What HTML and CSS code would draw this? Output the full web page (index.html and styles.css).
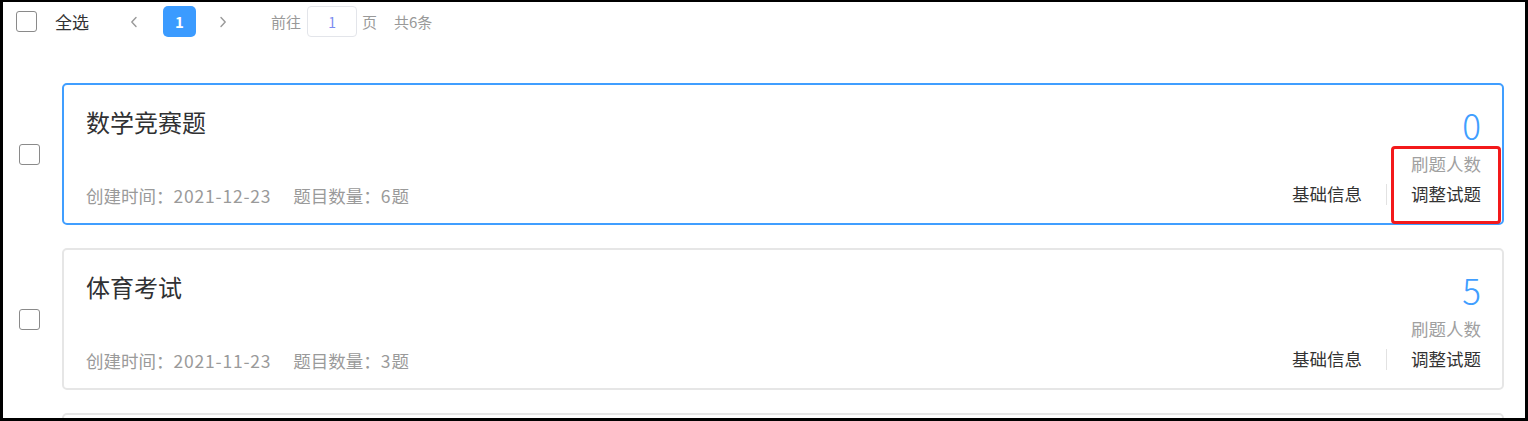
FILE: index.html
```html
<!DOCTYPE html>
<html lang="zh-CN">
<head>
<meta charset="utf-8">
<title>题库列表</title>
<link rel="stylesheet" href="styles.css">
</head>
<body>
<div class="frame">
  <div class="toolbar">
    <span class="checkbox"></span>
    <span class="select-all">全选</span>
    <button class="pager-btn prev" aria-label="上一页">
      <svg width="8" height="12" viewBox="0 0 8 12"><path d="M6 1.5 L1.8 6 L6 10.5" fill="none" stroke="#999" stroke-width="1.4" stroke-linecap="round" stroke-linejoin="round"/></svg>
    </button>
    <span class="pager-num">1</span>
    <button class="pager-btn next" aria-label="下一页">
      <svg width="8" height="12" viewBox="0 0 8 12"><path d="M2 1.5 L6.2 6 L2 10.5" fill="none" stroke="#999" stroke-width="1.4" stroke-linecap="round" stroke-linejoin="round"/></svg>
    </button>
    <span class="jump-text first">前往</span>
    <span class="jump-input">1</span>
    <span class="jump-text">页</span>
    <span class="total">共6条</span>
  </div>

  <div class="list">
    <div class="row">
      <span class="checkbox"></span>
      <div class="card active">
        <div class="card-left">
          <div class="card-title">数学竞赛题</div>
          <div class="card-meta"><span>创建时间：<span class="num">2021-12-23</span></span><span class="meta-gap">题目数量：<span class="num">6</span>题</span></div>
        </div>
        <div class="card-right">
          <div class="count">0</div>
          <div class="count-label">刷题人数</div>
          <div class="actions"><span>基础信息</span><span class="sep"></span><span>调整试题</span></div>
        </div>
        <div class="highlight"></div>
      </div>
    </div>

    <div class="row">
      <span class="checkbox"></span>
      <div class="card">
        <div class="card-left">
          <div class="card-title">体育考试</div>
          <div class="card-meta"><span>创建时间：<span class="num">2021-11-23</span></span><span class="meta-gap">题目数量：<span class="num">3</span>题</span></div>
        </div>
        <div class="card-right">
          <div class="count">5</div>
          <div class="count-label">刷题人数</div>
          <div class="actions"><span>基础信息</span><span class="sep"></span><span>调整试题</span></div>
        </div>
      </div>
    </div>

    <div class="row">
      <span class="checkbox"></span>
      <div class="card">
        <div class="card-left">
          <div class="card-title">&nbsp;</div>
        </div>
      </div>
    </div>
  </div>
</div>
</body>
</html>
```

FILE: styles.css
```css
html, body {
  margin: 0;
  padding: 0;
  background: #fff;
}

body {
  font-family: "Noto Sans CJK SC", "Noto Sans", sans-serif;
  color: #333;
}

.frame {
  box-sizing: border-box;
  width: 1528px;
  height: 421px;
  border-style: solid;
  border-color: #000;
  border-width: 2px 3px 3px 3px;
  overflow: hidden;
  background: #fff;
}

/* toolbar */
.toolbar {
  display: flex;
  align-items: center;
  height: 31px;
  margin-top: 4px;
  padding-left: 13px;
}

.checkbox {
  flex: none;
  box-sizing: border-box;
  width: 21px;
  height: 21px;
  border: 1px solid #8a8a8a;
  border-radius: 3px;
  background: #fff;
}

.select-all {
  margin-left: 18px;
  font-size: 17px;
  color: #333;
}

.pager-btn {
  display: flex;
  align-items: center;
  justify-content: center;
  width: 30px;
  height: 31px;
  padding: 0;
  border: none;
  background: transparent;
}

.pager-btn.prev {
  margin-left: 30px;
}

.pager-btn.next {
  margin-left: 12px;
}

.pager-num {
  display: flex;
  align-items: center;
  justify-content: center;
  width: 33px;
  height: 31px;
  margin-left: 14px;
  border-radius: 5px;
  background: #3b9bff;
  color: #fff;
  font-size: 15px;
  font-weight: 700;
}

.jump-text {
  font-size: 15px;
  color: #999;
  margin-left: 5px;
}

.jump-text.first {
  margin-left: 33px;
}

.jump-input {
  box-sizing: border-box;
  display: flex;
  align-items: center;
  justify-content: center;
  width: 50px;
  height: 31px;
  margin-left: 6px;
  border: 1px solid #e3e5ea;
  border-radius: 4px;
  color: #7b8cf0;
  font-size: 14px;
}

.total {
  margin-left: 17px;
  font-size: 15px;
  color: #999;
}

/* list */
.list {
  display: flex;
  flex-direction: column;
  gap: 23px;
  padding-top: 46px;
}

.row {
  display: flex;
  align-items: center;
  padding-left: 16px;
}

.card {
  position: relative;
  flex: 1;
  box-sizing: border-box;
  height: 142px;
  margin-left: 22px;
  margin-right: 21px;
  padding: 18px 21px 14px 22px;
  border: 2px solid #e6e6e6;
  border-radius: 5px;
  display: flex;
  justify-content: space-between;
}

.card.active {
  border-color: #409eff;
}

.card-left {
  display: flex;
  flex-direction: column;
  justify-content: space-between;
}

.card-title {
  font-size: 24px;
  line-height: 38px;
  color: #303133;
}

.card-meta {
  font-size: 17.5px;
  line-height: 30px;
  color: #9a9a9a;
  margin-bottom: -2px;
}

.num {
  letter-spacing: 0.8px;
}

.meta-gap {
  margin-left: 22px;
}

.card-right {
  display: flex;
  flex-direction: column;
  align-items: flex-end;
}

.count {
  font-size: 35px;
  line-height: 44px;
  color: #409eff;
  font-weight: 300;
}

.count-label {
  margin-top: 2px;
  font-size: 17.5px;
  line-height: 30px;
  color: #a0a0a0;
}

.actions {
  display: flex;
  align-items: center;
  font-size: 17.5px;
  line-height: 30px;
  color: #333;
}

.sep {
  width: 1px;
  height: 21px;
  margin: 0 24px;
  background: #e2e2e2;
}

.highlight {
  position: absolute;
  right: 1px;
  bottom: -1px;
  box-sizing: border-box;
  width: 110px;
  height: 78px;
  border: 3px solid #f3191b;
  border-radius: 4px;
}
```
